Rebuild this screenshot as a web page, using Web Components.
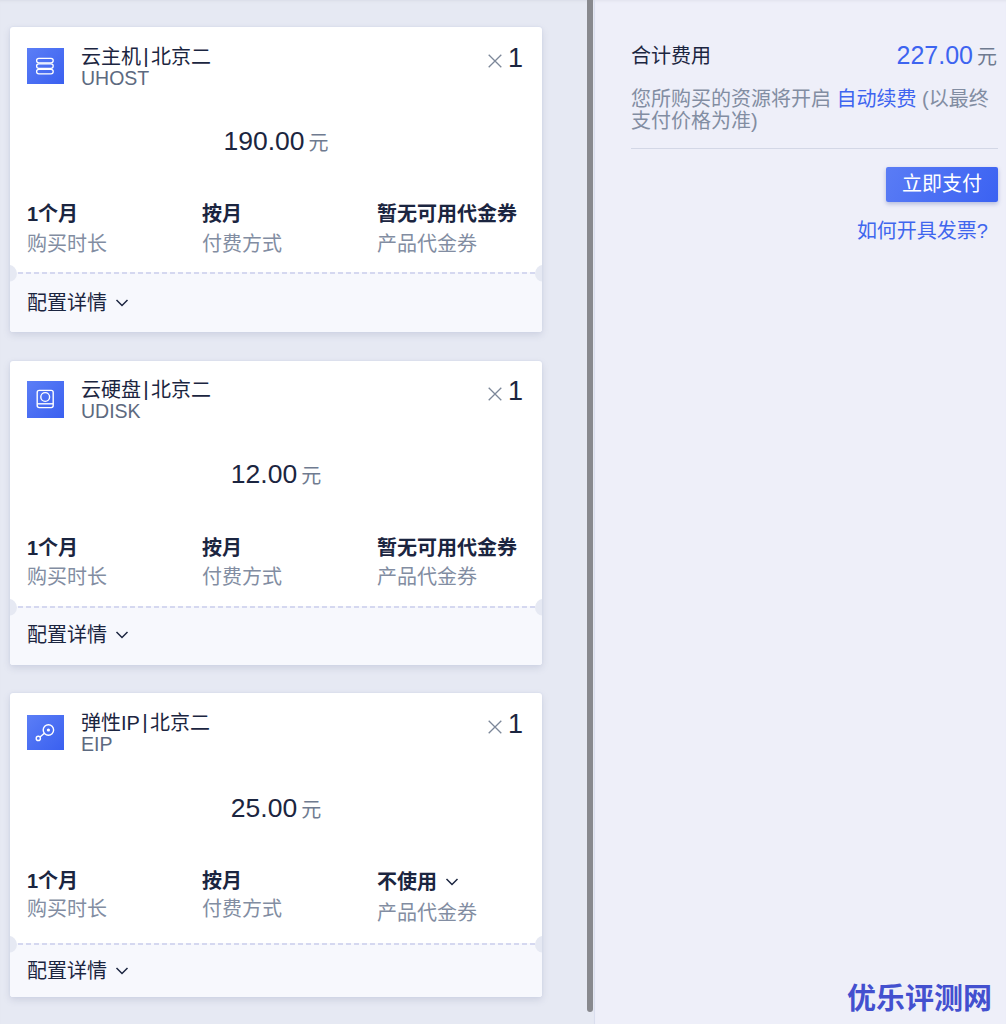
<!DOCTYPE html>
<html lang="zh">
<head>
<meta charset="utf-8">
<title>订单</title>
<style>
  html, body { margin: 0; height: 100%; }
  body { font-family: "Liberation Sans", "Noto Sans CJK SC", sans-serif; overflow: hidden; }
</style>
</head>
<body>
<order-page>
  <order-card slot="cards" name="云主机" code="UHOST" price="190.00" voucher="暂无可用代金券"
    style="margin-bottom:1px;--price-top:32px;--icon-top:1px;--icon-h:36px;--gap-label:8px;--stats-top:40px;--stats-bottom:17px;--foot-h:58px;--foot-lh:59px">
    <svg slot="icon" viewBox="0 0 37 36" fill="none" stroke="#fff" stroke-width="1.3">
      <rect x="9.6" y="10.4" width="16.6" height="4.4" rx="2.2"/>
      <rect x="9.6" y="15.9" width="16.6" height="4.4" rx="2.2"/>
      <rect x="9.6" y="21.4" width="16.6" height="4.4" rx="2.2"/>
    </svg>
  </order-card>
  <order-card slot="cards" name="云硬盘" code="UDISK" price="12.00" voucher="暂无可用代金券"
    style="--top:19px;--price-top:32px;--icon-top:1px;--icon-h:37px;--gap-label:7px;--stats-top:41px;--stats-bottom:18px;--foot-h:57px;--foot-lh:55px">
    <svg slot="icon" viewBox="0 0 37 37" fill="none" stroke="#fff" stroke-width="1.4">
      <rect x="10.2" y="9.4" width="16" height="17.2" rx="2"/>
      <circle cx="18.2" cy="16" r="4.4"/>
      <path d="M10.2 22.8h16"/>
    </svg>
  </order-card>
  <order-card slot="cards" name="弹性IP" code="EIP" price="25.00" voucher="不使用" picker
    style="--top:20px;--price-top:33px;--icon-top:2px;--icon-h:35px;--gap-label:6px;--stats-top:40px;--stats-bottom:19px;--foot-h:52px;--foot-lh:53px">
    <svg slot="icon" viewBox="0 0 37 35" fill="none" stroke="#fff" stroke-width="1.4">
      <circle cx="21.4" cy="15" r="5.2"/>
      <circle cx="21.4" cy="15" r="1.6" fill="#fff" stroke="none"/>
      <circle cx="11.3" cy="23.4" r="2.1"/>
      <path d="M13 22l4.4-3.7"/>
    </svg>
  </order-card>
  <order-summary slot="summary" total="227.00"></order-summary>
</order-page>

<script>
class OrderPage extends HTMLElement {
  constructor() {
    super();
    this.attachShadow({ mode: "open" });
    this.shadowRoot.innerHTML = `
      <style>
        :host {
          display: grid;
          grid-template-columns: 594px 1fr;
          height: 1024px;
          position: relative;
          box-sizing: border-box;
        }
        .left {
          display: flex;
          background: #e6e9f3;
          box-shadow: inset 0 3px 3px -2px #d9dce6;
          box-sizing: border-box;
          padding-right: 1px;
        }
        .cards {
          width: 532px;
          margin-left: 10px;
          padding-top: 27px;
          display: flex;
          flex-direction: column;
          gap: 28px;
        }
        .thumb {
          width: 6px;
          height: 1012px;
          margin-left: 45px;
          background: #88898e;
          border-radius: 0 0 3px 3px;
        }
        .right {
          background: #eeeff9;
          border-left: 1px solid #dadeee;
          box-shadow: inset 0 3px 3px -2px #e0e2ec;
          padding: 41px 8px 0 36px;
        }
        .mark {
          position: absolute;
          right: 14px;
          bottom: 7px;
          font: 700 29px/42px "Noto Sans CJK SC", sans-serif;
          color: #4350cf;
        }
      </style>
      <div class="left">
        <div class="cards"><slot name="cards"></slot></div>
        <div class="thumb"></div>
      </div>
      <div class="right"><slot name="summary"></slot></div>
      <div class="mark">优乐评测网</div>
    `;
  }
}

class OrderCard extends HTMLElement {
  constructor() {
    super();
    this.attachShadow({ mode: "open" });
    const name = this.getAttribute("name");
    const code = this.getAttribute("code");
    const price = this.getAttribute("price");
    const voucher = this.getAttribute("voucher");
    const picker = this.hasAttribute("picker");
    const chevron = `<svg class="chev" viewBox="0 0 14 8" fill="none" stroke="#1b2540" stroke-width="1.5"><path d="M1.5 1l5.500 5.500L12.500 1"/></svg>`;
    this.shadowRoot.innerHTML = `
      <style>
        :host {
          display: block;
          background: #fff;
          border-radius: 3px;
          box-shadow: 0 0 2px #cdd3e8, 0 3px 7px rgba(120,128,160,.22);
          color: #1b2540;
          font-size: 20px;
          position: relative;
        }
        .head {
          display: flex;
          align-items: flex-start;
          padding: var(--top, 20px) 20px 0 17px;
        }
        .icon {
          width: 37px;
          height: var(--icon-h, 37px);
          background: linear-gradient(135deg, #5b7ef6, #3a60f0);
          margin-right: 17px;
          margin-top: var(--icon-top, 1px);
          flex: none;
        }
        .icon ::slotted(svg) { display: block; width: 37px; height: 100%; }
        .title { flex: 1; line-height: 22px; margin-top: -1px; }
        .bar { display: inline-block; width: 10px; text-align: center; font-size: 21px; line-height: 1px; vertical-align: 1px; }
        .code { color: #5d6a80; font-size: 19.5px; margin-top: -1px; }
        .qty { display: flex; align-items: flex-start; gap: 6px; font-size: 27px; line-height: 30px; margin: -4px -1px -4px 0; }
        .qty svg { width: 14px; height: 14px; margin-top: 11px; }
        .price {
          text-align: center;
          padding-top: var(--price-top, 31px);
          line-height: 40px;
          font-size: 26.5px;
        }
        .price span { font-size: 20px; color: #6f7b90; margin-left: 4px; }
        .stats {
          display: grid;
          grid-template-columns: 175px 175px 1fr;
          padding: var(--stats-top, 41px) 17px var(--stats-bottom, 16px);
          line-height: 22px;
        }
        .stats b { display: block; font-weight: 700; }
        .stats i { display: block; font-style: normal; color: #828da2; margin-top: var(--gap-label, 8px); }
        .stats .pick b { margin-top: 1px; }
        .stats .pick i { margin-top: 9px; }
        .chev { width: 14px; height: 8px; margin-left: 8px; vertical-align: 3px; }
        .dash {
          height: 2px;
          position: relative;
          background-image: repeating-linear-gradient(90deg, #d5d8f0 0 5px, #f7f8fd 5px 8px);
        }
        .foot {
          background: #f7f8fd;
          height: var(--foot-h, 58px);
          line-height: var(--foot-lh, 57px);
          padding-left: 17px;
          border-radius: 0 0 3px 3px;
        }
        .notch {
          position: absolute;
          top: -7.500px;
          width: 17px;
          height: 17px;
          border-radius: 50%;
          background: #e6e9f3;
        }
        .notch.l { left: -10px; clip-path: inset(0 0 0 10px); }
        .notch.r { right: -10px; clip-path: inset(0 10px 0 0); }
      </style>
      <div class="head">
        <div class="icon"><slot name="icon"></slot></div>
        <div class="title">${name}<span class="bar">|</span>北京二<div class="code">${code}</div></div>
        <div class="qty">
          <svg viewBox="0 0 14 14" fill="none" stroke="#7c8799" stroke-width="1.3"><path d="M.7 .7l12.600 12.600M13.300 .7L.7 13.300"/></svg>1
        </div>
      </div>
      <div class="price">${price}<span>元</span></div>
      <div class="stats">
        <div><b>1个月</b><i>购买时长</i></div>
        <div><b>按月</b><i>付费方式</i></div>
        <div class="${picker ? "pick" : ""}"><b>${voucher}${picker ? chevron : ""}</b><i>产品代金券</i></div>
      </div>
      <div class="dash"><span class="notch l"></span><span class="notch r"></span></div>
      <div class="foot">配置详情${chevron}</div>
    `;
  }
}

class OrderSummary extends HTMLElement {
  constructor() {
    super();
    this.attachShadow({ mode: "open" });
    this.shadowRoot.innerHTML = `
      <style>
        :host {
          display: block;
          font-size: 20px;
          color: #1b2540;
        }
        .total { display: flex; justify-content: space-between; align-items: center; line-height: 28px; padding-right: 1px; }
        .amount { color: #3d64f0; font-size: 25px; }
        .amount span { font-size: 20px; color: #6f7b90; margin-left: 4px; }
        .note { color: #828da2; line-height: 22px; margin-top: 17px; padding-bottom: 16px; border-bottom: 1px solid #d3d7e6; }
        .note a { color: #3d64f0; }
        .actions { display: flex; flex-direction: column; align-items: flex-end; }
        .pay {
          margin-top: 18px;
          width: 112px;
          height: 35px;
          line-height: 35px;
          text-align: center;
          color: #fff;
          border-radius: 2px;
          background: linear-gradient(120deg, #5a7cf5, #3b62f2);
          box-shadow: 0 2px 4px rgba(70,90,170,.35);
        }
        .help { color: #3f66ee; margin-top: 18px; margin-right: 10px; line-height: 22px; }
      </style>
      <div class="total"><div>合计费用</div><div class="amount">${this.getAttribute("total")}<span>元</span></div></div>
      <div class="note">您所购买的资源将开启 <a>自动续费</a> (以最终<br>支付价格为准)</div>
      <div class="actions">
        <div class="pay">立即支付</div>
        <div class="help">如何开具发票?</div>
      </div>
    `;
  }
}

customElements.define("order-page", OrderPage);
customElements.define("order-card", OrderCard);
customElements.define("order-summary", OrderSummary);
</script>
</body>
</html>
